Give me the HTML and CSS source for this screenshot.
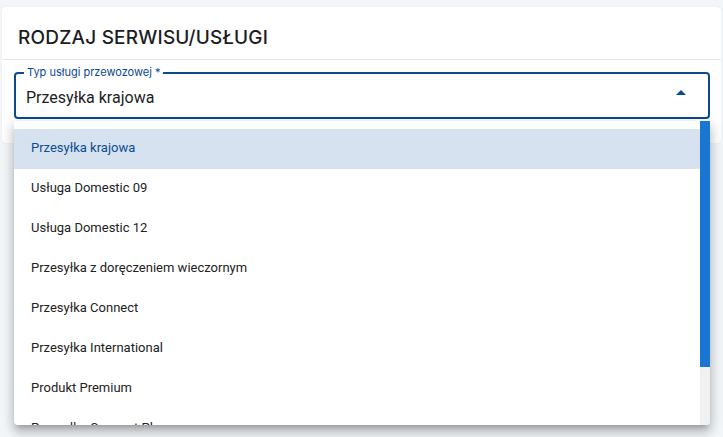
FILE: index.html
```html
<!DOCTYPE html>
<html lang="pl">
<head>
<meta charset="utf-8">
<link rel="stylesheet" href="styles.css">
</head>
<body>
<div class="page">
  <section class="card">
    <header class="card-header">
      <h2 class="title">RODZAJ SERWISU/USŁUGI</h2>
    </header>
    <div class="card-body">
      <div class="field">
        <span class="field-label">Typ usługi przewozowej *</span>
        <span class="field-value">Przesyłka krajowa</span>
        <svg class="arrow" width="10" height="5" viewBox="0 0 10 5"><path d="M0 5 L5 0 L10 5 Z" fill="#0b4a8e"/></svg>
      </div>
      <div class="menu">
        <ul class="menu-list">
          <li class="menu-item selected">Przesyłka krajowa</li>
          <li class="menu-item">Usługa Domestic 09</li>
          <li class="menu-item">Usługa Domestic 12</li>
          <li class="menu-item">Przesyłka z doręczeniem wieczornym</li>
          <li class="menu-item">Przesyłka Connect</li>
          <li class="menu-item">Przesyłka International</li>
          <li class="menu-item">Produkt Premium</li>
          <li class="menu-item">Przesyłka Connect Plus</li>
        </ul>
        <div class="scrollbar"><div class="thumb"></div></div>
      </div>
    </div>
  </section>
</div>
</body>
</html>
```

FILE: styles.css
```css
html, body {
  margin: 0;
  padding: 0;
}
body {
  background: #f3f6f9;
  font-family: Roboto, "Noto Sans", sans-serif;
  width: 723px;
  height: 437px;
  overflow: hidden;
}
.page {
  padding: 7px 2px 0 2px;
}
.card {
  background: #fff;
  border-radius: 4px;
  box-shadow: 0 0 1px rgba(0,0,0,0.12);
  position: relative;
  height: 136px;
}
.card-header {
  height: 52px;
  display: flex;
  align-items: center;
  padding-left: 16px;
  border-bottom: 1px solid #e2e4e7;
}
.title {
  margin: 0;
  font-family: Inter, "Noto Sans", sans-serif;
  font-size: 19px;
  font-weight: 500;
  color: #1d1d1f;
  letter-spacing: 0.2px;
  padding-top: 8px;
}
.card-body {
  padding: 12px 11px 0 12px;
}
.field {
  position: relative;
  height: 47px;
  border: 2px solid #0b4a8e;
  border-radius: 4px;
  box-sizing: border-box;
  display: flex;
  align-items: center;
  padding: 0 22px 0 10px;
  width: 696px;
}
.field-label {
  position: absolute;
  top: -8px;
  left: 8px;
  background: #fff;
  padding: 0 3px;
  font-family: Inter, "Noto Sans", sans-serif;
  font-size: 11px;
  color: #0b4a8e;
  line-height: 13px;
}
.field-value {
  flex: 1;
  font-size: 16px;
  color: #1d1d1f;
  padding-top: 3px;
}
.arrow {
  margin-top: -6px;
}
.menu {
  position: absolute;
  top: 114px;
  left: 12px;
  width: 696px;
  height: 304px;
  background: #fff;
  overflow: hidden;
  box-shadow: 0 5px 5px -3px rgba(0,0,0,0.2), 0 8px 10px 1px rgba(0,0,0,0.14), 0 3px 14px 2px rgba(0,0,0,0.12);
  border-radius: 0 0 4px 4px;
}
.menu-list {
  list-style: none;
  margin: 0;
  padding: 8px 10px 0 0;
}
.menu-item {
  height: 40px;
  box-sizing: border-box;
  display: flex;
  align-items: center;
  padding-left: 17px;
  padding-bottom: 3px;
  font-size: 13px;
  color: #222;
}
.menu-item.selected {
  background: #d6e2ef;
  color: #0d4d92;
}
.scrollbar {
  position: absolute;
  top: 0;
  right: 0;
  width: 10px;
  height: 100%;
  background: #f1f1f1;
}
.thumb {
  height: 246px;
  background: #1976d2;
}
```
